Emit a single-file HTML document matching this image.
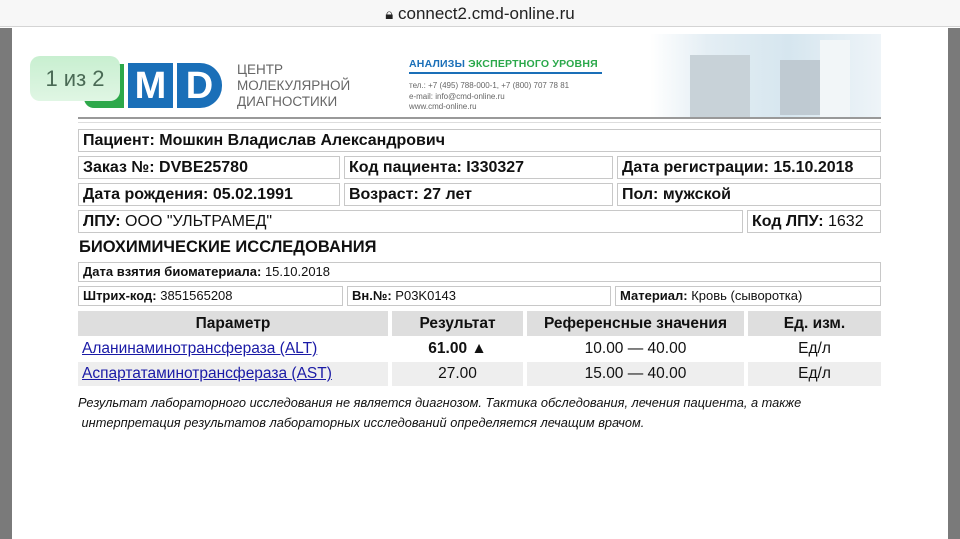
<!DOCTYPE html>
<html><head><meta charset="utf-8"><style>
*{margin:0;padding:0;box-sizing:border-box}
body{width:960px;height:539px;background:#fff;position:relative;overflow:hidden;font-family:"Liberation Sans",sans-serif;color:#111}
.a{position:absolute}
.box{position:absolute;border:1px solid #c8c8c8;padding-left:4px;white-space:nowrap;overflow:hidden}
.b{font-weight:bold}
.big{font-size:16px;font-weight:bold;line-height:21px}
.sm{font-size:13px;line-height:17px}
.th{position:absolute;background:#dedede;font-weight:bold;font-size:15.5px;text-align:center;line-height:25px}
.td{position:absolute;font-size:15.5px;text-align:center;line-height:24px}
.g{background:#eeeeee}
a{color:#1a1aa6}
</style></head><body>
<div class="a" style="left:0;top:0;width:960px;height:27px;background:#f7f7f7;border-bottom:1px solid #d4d4d4"></div>
<div class="a" style="left:0;top:4px;width:960px;text-align:center;font-size:17px;color:#222"><span style="font-size:15px">&#128274;&#xFE0E;</span> connect2.cmd-online.ru</div>
<div class="a" style="left:0;top:28px;width:12px;height:511px;background:#7a7a7a"></div>
<div class="a" style="left:948px;top:28px;width:12px;height:511px;background:#7a7a7a"></div>
<!-- logo -->
<div class="a" style="left:84px;top:64px;width:40px;height:44px;background:#2da84a;border-radius:0 0 0 10px"></div>
<div class="a" style="left:128px;top:63px;width:45px;height:45px;background:#1a6fb8;color:#fff;font-size:38px;font-weight:bold;text-align:center;line-height:46px">M</div>
<div class="a" style="left:177px;top:63px;width:45px;height:45px;background:#1a6fb8;color:#fff;font-size:38px;font-weight:bold;text-align:center;line-height:46px;border-radius:0 22px 22px 0">D</div>
<div class="a" style="left:30px;top:56px;width:90px;height:45px;background:linear-gradient(#c8efd0,#e0f6e4);border-radius:10px;color:#4a6a55;font-size:22px;text-align:center;line-height:45px">1 из 2</div>
<div class="a" style="left:237px;top:62px;font-size:13.5px;line-height:16px;color:#666">ЦЕНТР<br>МОЛЕКУЛЯРНОЙ<br>ДИАГНОСТИКИ</div>
<div class="a" style="left:409px;top:58px;font-size:10.5px;font-weight:bold;color:#1a6fb8;border-bottom:2px solid #1a6fb8;padding-bottom:2px;width:193px;white-space:nowrap;letter-spacing:0.2px">АНАЛИЗЫ <span style="color:#2aa84a">ЭКСПЕРТНОГО УРОВНЯ</span></div>
<div class="a" style="left:409px;top:81px;font-size:8px;line-height:10.5px;color:#666">тел.: +7 (495) 788-000-1, +7 (800) 707 78 81<br>e-mail: info@cmd-online.ru<br>www.cmd-online.ru</div>
<div class="a" style="left:650px;top:34px;width:231px;height:84px;background:linear-gradient(90deg,#fff 0%,#e4eef4 25%,#d6e6ef 60%,#eef4f8 100%)"></div>
<div class="a" style="left:690px;top:55px;width:60px;height:62px;background:#c8d2d8"></div>
<div class="a" style="left:780px;top:60px;width:60px;height:55px;background:#bfcad2"></div>
<div class="a" style="left:820px;top:40px;width:30px;height:78px;background:#f2f6f8"></div>
<div class="a" style="left:78px;top:117px;width:803px;height:2px;background:#999"></div>
<div class="a" style="left:78px;top:122px;width:803px;height:1px;background:#ddd"></div>
<!-- boxes -->
<div class="box big" style="left:78px;top:129px;width:803px;height:23px">Пациент: Мошкин Владислав Александрович</div>
<div class="box big" style="left:78px;top:156px;width:262px;height:23px">Заказ №: DVBE25780</div>
<div class="box big" style="left:344px;top:156px;width:269px;height:23px">Код пациента: I330327</div>
<div class="box big" style="left:617px;top:156px;width:264px;height:23px">Дата регистрации: 15.10.2018</div>
<div class="box big" style="left:78px;top:183px;width:262px;height:23px">Дата рождения: 05.02.1991</div>
<div class="box big" style="left:344px;top:183px;width:269px;height:23px">Возраст: 27 лет</div>
<div class="box big" style="left:617px;top:183px;width:264px;height:23px">Пол: мужской</div>
<div class="box" style="left:78px;top:210px;width:665px;height:23px;font-size:16px;line-height:21px"><b>ЛПУ:</b> ООО "УЛЬТРАМЕД"</div>
<div class="box" style="left:747px;top:210px;width:134px;height:23px;font-size:16px;line-height:21px"><b>Код ЛПУ:</b> 1632</div>
<div class="a" style="left:79px;top:238px;font-size:16.5px;font-weight:bold">БИОХИМИЧЕСКИЕ ИССЛЕДОВАНИЯ</div>
<div class="box sm" style="left:78px;top:262px;width:803px;height:20px"><b>Дата взятия биоматериала:</b> 15.10.2018</div>
<div class="box sm" style="left:78px;top:286px;width:265px;height:20px"><b>Штрих-код:</b> 3851565208</div>
<div class="box sm" style="left:347px;top:286px;width:264px;height:20px"><b>Вн.№:</b> P03K0143</div>
<div class="box sm" style="left:615px;top:286px;width:266px;height:20px"><b>Материал:</b> Кровь (сыворотка)</div>
<!-- table -->
<div class="th" style="left:78px;top:311px;width:310px">Параметр</div>
<div class="th" style="left:392px;top:311px;width:131px">Результат</div>
<div class="th" style="left:527px;top:311px;width:217px">Референсные значения</div>
<div class="th" style="left:748px;top:311px;width:133px">Ед. изм.</div>
<div class="td" style="left:78px;top:337px;width:310px;text-align:left;padding-left:4px"><a href="#">Аланинаминотрансфераза (ALT)</a></div>
<div class="td b" style="left:392px;top:337px;width:131px">61.00 ▲</div>
<div class="td" style="left:527px;top:337px;width:217px">10.00 — 40.00</div>
<div class="td" style="left:748px;top:337px;width:133px">Ед/л</div>
<div class="td g" style="left:78px;top:362px;width:310px;text-align:left;padding-left:4px"><a href="#">Аспартатаминотрансфераза (AST)</a></div>
<div class="td g" style="left:392px;top:362px;width:131px">27.00</div>
<div class="td g" style="left:527px;top:362px;width:217px">15.00 — 40.00</div>
<div class="td g" style="left:748px;top:362px;width:133px">Ед/л</div>
<div class="a" style="left:78px;top:393px;font-size:12.8px;font-style:italic;line-height:20px;color:#111;white-space:nowrap">Результат лабораторного исследования не является диагнозом. Тактика обследования, лечения пациента, а также<br>&nbsp;интерпретация результатов лабораторных исследований определяется лечащим врачом.</div>
</body></html>
